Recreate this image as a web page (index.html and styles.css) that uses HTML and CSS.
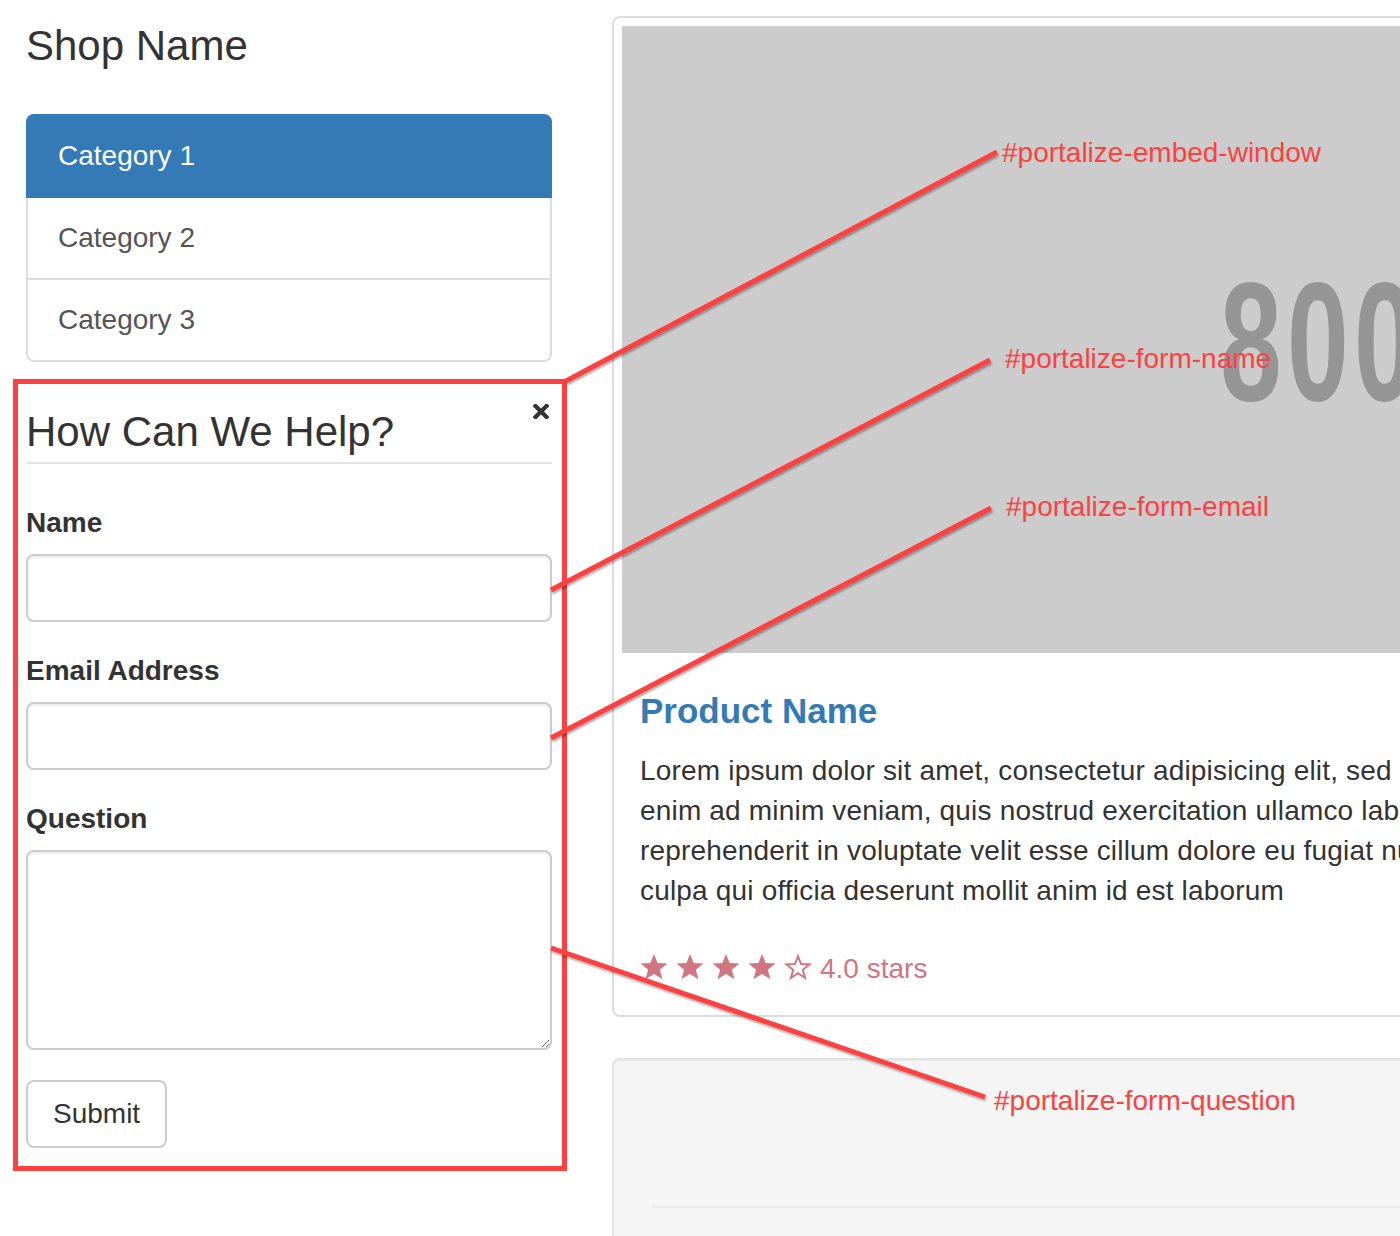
FILE: index.html
```html
<!DOCTYPE html>
<html lang="en">
<head>
<meta charset="utf-8">
<title>Shop Name</title>
<link rel="stylesheet" href="styles.css">
</head>
<body>
<div class="page">
  <div class="col-left">
    <p class="lead">Shop Name</p>
    <div class="list-group">
      <a class="list-group-item active">Category 1</a>
      <a class="list-group-item">Category 2</a>
      <a class="list-group-item">Category 3</a>
    </div>
    <div class="embed-window">
      <div class="embed-header">
        <h3 class="embed-title">How Can We Help?</h3>
        <span class="close">
          <svg width="16" height="15" viewBox="0 0 16 15"><path d="M2.5 2 L13.5 13 M13.5 2 L2.5 13" stroke="#333" stroke-width="4.2" stroke-linecap="square"/></svg>
        </span>
      </div>
      <form class="embed-form">
        <div class="form-group">
          <label>Name</label>
          <input type="text" class="form-control">
        </div>
        <div class="form-group">
          <label>Email Address</label>
          <input type="email" class="form-control">
        </div>
        <div class="form-group form-group-last">
          <label>Question</label>
          <textarea class="form-control textarea"></textarea>
        </div>
        <button type="button" class="btn">Submit</button>
      </form>
    </div>
  </div>
  <div class="col-right">
    <div class="thumbnail">
      <div class="placeholder"><span class="placeholder-text">800 x 300</span></div>
      <div class="caption">
        <h4 class="product-name">Product Name</h4>
        <p class="desc">Lorem ipsum dolor sit amet, consectetur adipisicing elit, sed do eiusmod tempor incididunt ut labore et dolore magna aliqua. Ut<br>enim ad minim veniam, quis nostrud exercitation ullamco laboris nisi ut aliquip ex ea commodo consequat. Duis aute irure dolor in<br>reprehenderit in voluptate velit esse cillum dolore eu fugiat nulla pariatur. Excepteur sint occaecat cupidatat non proident, sunt in<br>culpa qui officia deserunt mollit anim id est laborum</p>
        <p class="ratings"><svg class="star" viewBox="0 0 24 24"><path d="M12 0.8 L15.1 8.6 L23.6 8.9 L17 14.3 L19.3 22.6 L12 17.9 L4.7 22.6 L7 14.3 L0.4 8.9 L8.9 8.6 Z" fill="#d17581"/></svg><svg class="star" viewBox="0 0 24 24"><path d="M12 0.8 L15.1 8.6 L23.6 8.9 L17 14.3 L19.3 22.6 L12 17.9 L4.7 22.6 L7 14.3 L0.4 8.9 L8.9 8.6 Z" fill="#d17581"/></svg><svg class="star" viewBox="0 0 24 24"><path d="M12 0.8 L15.1 8.6 L23.6 8.9 L17 14.3 L19.3 22.6 L12 17.9 L4.7 22.6 L7 14.3 L0.4 8.9 L8.9 8.6 Z" fill="#d17581"/></svg><svg class="star" viewBox="0 0 24 24"><path d="M12 0.8 L15.1 8.6 L23.6 8.9 L17 14.3 L19.3 22.6 L12 17.9 L4.7 22.6 L7 14.3 L0.4 8.9 L8.9 8.6 Z" fill="#d17581"/></svg><svg class="star" viewBox="0 0 24 24"><path d="M12 2.6 L14.6 9.5 L21.9 9.8 L16.1 14.4 L18.1 21.4 L12 17.3 L5.9 21.4 L7.9 14.4 L2.1 9.8 L9.4 9.5 Z" fill="none" stroke="#d17581" stroke-width="1.7" stroke-linejoin="miter"/></svg>4.0 stars</p>
      </div>
    </div>
    <div class="well">
      <div class="well-actions"></div>
      <hr class="well-rule">
    </div>
  </div>
</div>
<svg class="annotations" width="1400" height="1236" viewBox="0 0 1400 1236">
  <defs>
    <filter id="shadow" x="-10%" y="-10%" width="120%" height="130%">
      <feDropShadow dx="1" dy="2" stdDeviation="1.2" flood-color="#000" flood-opacity="0.35"/>
    </filter>
  </defs>
  <g stroke="#fd4141" stroke-width="5" filter="url(#shadow)">
    <line x1="566" y1="381" x2="997" y2="152"/>
    <line x1="551" y1="590" x2="990" y2="360"/>
    <line x1="551" y1="738" x2="991" y2="508"/>
    <line x1="551" y1="948" x2="985" y2="1097"/>
  </g>
  <g class="ann-text">
    <text x="1002" y="162">#portalize-embed-window</text>
    <text x="1005" y="368">#portalize-form-name</text>
    <text x="1006" y="516">#portalize-form-email</text>
    <text x="994" y="1110">#portalize-form-question</text>
  </g>
</svg>
</body>
</html>
```

FILE: styles.css
```css
html, body {
  margin: 0;
  padding: 0;
}

body {
  width: 1400px;
  height: 1236px;
  overflow: hidden;
  position: relative;
  background: #fff;
  color: #333;
  font-family: "Liberation Sans", Arial, Helvetica, sans-serif;
  font-size: 28px;
  line-height: 40px;
}

.page {
  display: grid;
  grid-template-columns: 526px 1800px;
  column-gap: 60px;
  padding-left: 26px;
  align-items: start;
}

/* Left column */
.lead {
  margin: 16px 0 39px;
  font-size: 42px;
  line-height: 59px;
  font-weight: 300;
  color: #333;
}

.list-group {
  display: flex;
  flex-direction: column;
}

.list-group-item {
  display: block;
  padding: 20px 30px;
  font-size: 28px;
  line-height: 40px;
  color: #555;
  background: #fff;
  border: 2px solid #ddd;
  margin-bottom: -2px;
}

.list-group-item:first-child {
  border-radius: 8px 8px 0 0;
}

.list-group-item:last-child {
  border-radius: 0 0 8px 8px;
  margin-bottom: 0;
}

.list-group-item.active {
  background: #337ab7;
  border-color: #337ab7;
  color: #fff;
  position: relative;
}

.embed-window {
  margin: 17px -15px 0 -13px;
  border: 5px solid #fd4141;
  padding: 8px 10px 18px 8px;
  background: #fff;
}

.embed-header {
  position: relative;
  border-bottom: 2px solid #e5e5e5;
  padding: 17px 0 7px;
}

.embed-title {
  margin: 0;
  font-size: 42px;
  line-height: 46px;
  font-weight: 400;
  color: #333;
}

.close {
  position: absolute;
  top: 12px;
  right: 3px;
  width: 16px;
  height: 15px;
  display: block;
}

.close svg {
  display: block;
}

.embed-form {
  margin-top: 39px;
}

.form-group {
  margin-bottom: 29px;
}

.form-group-last {
  margin-bottom: 30px;
}

.form-group label {
  display: block;
  font-weight: 700;
  font-size: 28px;
  line-height: 40px;
  margin-bottom: 11px;
  color: #333;
}

.form-control {
  display: block;
  box-sizing: border-box;
  width: 100%;
  height: 68px;
  margin: 0;
  padding: 12px 24px;
  font-family: inherit;
  font-size: 28px;
  color: #555;
  background: #fff;
  border: 2px solid #ccc;
  border-radius: 8px;
  box-shadow: inset 0 2px 2px rgba(0, 0, 0, 0.075);
  outline: none;
}

.textarea {
  height: 200px;
  resize: vertical;
}

.btn {
  display: block;
  box-sizing: border-box;
  height: 68px;
  padding: 0 25px;
  margin: 0;
  font-family: inherit;
  font-size: 28px;
  line-height: 40px;
  color: #333;
  background: #fff;
  border: 2px solid #ccc;
  border-radius: 8px;
}

/* Right column */
.thumbnail {
  margin-top: 16px;
  margin-bottom: 41px;
  border: 2px solid #ddd;
  border-radius: 8px;
  padding: 8px;
  background: #fff;
}

.placeholder {
  height: 627px;
  background: #ccc;
  display: flex;
  align-items: center;
  padding-left: 598px;
  overflow: hidden;
}

.placeholder-text {
  display: inline-block;
  font-family: "Liberation Sans", Arial, sans-serif;
  font-weight: 700;
  font-size: 168px;
  line-height: 168px;
  letter-spacing: 8px;
  color: #959595;
  white-space: nowrap;
  transform: scaleX(0.66);
  transform-origin: left center;
  margin-top: 4px;
}

.caption {
  padding: 18px 18px 0 18px;
}

.product-name {
  margin: 20px 0 20px;
  font-size: 35px;
  line-height: 40px;
  font-weight: 700;
  color: #337ab7;
}

.desc {
  margin: 0 0 38px;
  font-size: 28px;
  line-height: 40px;
  letter-spacing: 0.18px;
  color: #333;
  white-space: nowrap;
}

.ratings {
  margin: 0 0 18px;
  font-size: 28px;
  line-height: 40px;
  color: #d17581;
  white-space: nowrap;
}

.star {
  display: inline-block;
  width: 28px;
  height: 28px;
  margin-right: 8px;
  vertical-align: -3px;
}

.well {
  border: 2px solid #e3e3e3;
  border-radius: 8px;
  background: #f5f5f5;
  box-shadow: inset 0 1px 1px rgba(0, 0, 0, 0.05);
  padding: 38px;
  min-height: 300px;
}

.well-actions {
  height: 68px;
}

.well-rule {
  margin: 40px 0 0;
  border: 0;
  border-top: 2px solid #eaeaea;
}

/* Annotation overlay */
.annotations {
  position: absolute;
  left: 0;
  top: 0;
  pointer-events: none;
}

.ann-text text {
  font-family: "Liberation Sans", Arial, sans-serif;
  font-size: 28px;
  fill: #fd4141;
}
```
